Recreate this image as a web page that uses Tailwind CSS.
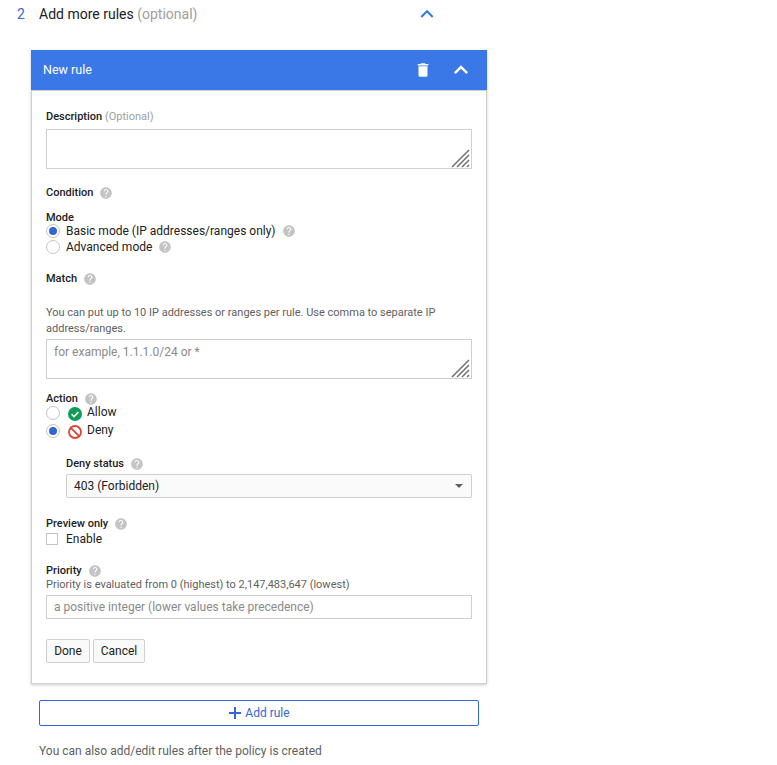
<!DOCTYPE html>
<html>
<head>
<meta charset="utf-8">
<script src="https://cdn.jsdelivr.net/npm/@tailwindcss/browser@4"></script>
</head>
<body class="bg-white font-['Roboto',sans-serif] text-[12px] text-[#212121] overflow-hidden">
<div class="w-[777px] h-[765px] overflow-hidden">
  <div class="h-[28px] flex items-center w-[440px] ml-[17px] text-[14px]">
    <span class="text-[#3367d6] w-[22px]">2</span>
    <span class="text-[#212121]">Add more rules <span class="text-[#9e9e9e]">(optional)</span></span>
    <svg class="ml-auto mr-[17px]" width="26" height="26" viewBox="0 0 24 24" fill="#3b78e7"><path d="M7.41 15.41L12 10.83l4.59 4.58L18 14l-6-6-6 6z"/></svg>
  </div>

  <div class="ml-[31px] mt-[22px] w-[456px] shadow-[0_1px_3px_rgba(0,0,0,0.2)]">
    <div class="h-[40px] bg-[#3b78e7] flex items-center pl-[12px] text-white">
      <span class="text-[12.5px]">New rule</span>
      <svg class="ml-auto" width="18" height="18" viewBox="0 0 24 24" fill="#fff"><path d="M6 19c0 1.1.9 2 2 2h8c1.1 0 2-.9 2-2V7H6v12zM19 4h-3.5l-1-1h-5l-1 1H5v2h14V4z"/></svg>
      <svg class="ml-[15px] mr-[12px]" width="28" height="28" viewBox="0 0 24 24" fill="#fff"><path d="M7.41 15.41L12 10.83l4.59 4.58L18 14l-6-6-6 6z"/></svg>
    </div>
    <div class="h-[594px] border border-[#cfcfcf] border-t-[#cfcfcf] px-[14px] pt-[18px] flex flex-col items-start">
      <div class="h-[16px] leading-[16px] text-[11px] font-medium">Description <span class="font-normal text-[#9e9e9e]">(Optional)</span></div>
      <div class="relative mt-[4px] w-[426px] h-[40px]">
        <textarea class="block w-full h-full border border-[#cfcfcf] resize-none outline-none"></textarea>
        <svg class="absolute right-[1px] bottom-[1px]" width="20" height="20" viewBox="0 0 20 20" stroke="#6f6f6f" stroke-width="1.5" fill="none"><path d="M1 19L18 2M6 19L18 7M11 19l7-7M16 19l2-2"/></svg>
      </div>

      <div class="mt-[16px] h-[16px] flex items-center gap-[6px] text-[11px] font-medium">Condition
        <svg width="14" height="14" viewBox="0 0 24 24" fill="#c4c4c4"><path d="M12 2C6.48 2 2 6.48 2 12s4.48 10 10 10 10-4.48 10-10S17.52 2 12 2zm1 17h-2v-2h2v2zm2.07-7.75l-.9.92C13.45 12.9 13 13.5 13 15h-2v-.5c0-1.1.45-2.1 1.17-2.83l1.24-1.26c.37-.36.59-.86.59-1.41 0-1.1-.9-2-2-2s-2 .9-2 2H8c0-2.21 1.79-4 4-4s4 1.79 4 4c0 .88-.36 1.68-.93 2.25z"/></svg>
      </div>
      <div class="mt-[10px] h-[13px] leading-[14px] text-[11px] font-medium">Mode</div>
      <div class="h-[14px] flex items-center">
        <span class="w-[14px] h-[14px] rounded-full border border-[#c4c4c4] flex items-center justify-center"><span class="w-[8px] h-[8px] rounded-full bg-[#3367d6]"></span></span>
        <span class="ml-[6px]">Basic mode (IP addresses/ranges only)</span>
        <svg class="ml-[6px]" width="14" height="14" viewBox="0 0 24 24" fill="#c4c4c4"><path d="M12 2C6.48 2 2 6.48 2 12s4.48 10 10 10 10-4.48 10-10S17.52 2 12 2zm1 17h-2v-2h2v2zm2.07-7.75l-.9.92C13.45 12.9 13 13.5 13 15h-2v-.5c0-1.1.45-2.1 1.17-2.83l1.24-1.26c.37-.36.59-.86.59-1.41 0-1.1-.9-2-2-2s-2 .9-2 2H8c0-2.21 1.79-4 4-4s4 1.79 4 4c0 .88-.36 1.68-.93 2.25z"/></svg>
      </div>
      <div class="mt-[2px] h-[14px] flex items-center">
        <span class="w-[14px] h-[14px] rounded-full border border-[#c4c4c4]"></span>
        <span class="ml-[6px]">Advanced mode</span>
        <svg class="ml-[6px]" width="14" height="14" viewBox="0 0 24 24" fill="#c4c4c4"><path d="M12 2C6.48 2 2 6.48 2 12s4.48 10 10 10 10-4.48 10-10S17.52 2 12 2zm1 17h-2v-2h2v2zm2.07-7.75l-.9.92C13.45 12.9 13 13.5 13 15h-2v-.5c0-1.1.45-2.1 1.17-2.83l1.24-1.26c.37-.36.59-.86.59-1.41 0-1.1-.9-2-2-2s-2 .9-2 2H8c0-2.21 1.79-4 4-4s4 1.79 4 4c0 .88-.36 1.68-.93 2.25z"/></svg>
      </div>

      <div class="mt-[17px] h-[16px] flex items-center gap-[6px] text-[11px] font-medium">Match
        <svg width="14" height="14" viewBox="0 0 24 24" fill="#c4c4c4"><path d="M12 2C6.48 2 2 6.48 2 12s4.48 10 10 10 10-4.48 10-10S17.52 2 12 2zm1 17h-2v-2h2v2zm2.07-7.75l-.9.92C13.45 12.9 13 13.5 13 15h-2v-.5c0-1.1.45-2.1 1.17-2.83l1.24-1.26c.37-.36.59-.86.59-1.41 0-1.1-.9-2-2-2s-2 .9-2 2H8c0-2.21 1.79-4 4-4s4 1.79 4 4c0 .88-.36 1.68-.93 2.25z"/></svg>
      </div>
      <p class="mt-[18px] w-[426px] text-[11px] leading-[16px] text-[#5f5f5f]">You can put up to 10 IP addresses or ranges per rule. Use comma to separate IP address/ranges.</p>
      <div class="relative mt-[2px] w-[426px] h-[40px]">
        <textarea class="block w-full h-full border border-[#cfcfcf] resize-none outline-none px-[7px] py-[3px] placeholder:text-[#8a8a8a]" placeholder="for example, 1.1.1.0/24 or *"></textarea>
        <svg class="absolute right-[1px] bottom-[1px]" width="20" height="20" viewBox="0 0 20 20" stroke="#6f6f6f" stroke-width="1.5" fill="none"><path d="M1 19L18 2M6 19L18 7M11 19l7-7M16 19l2-2"/></svg>
      </div>

      <div class="mt-[13px] h-[14px] flex items-center gap-[6px] text-[11px] font-medium">Action
        <svg width="14" height="14" viewBox="0 0 24 24" fill="#c4c4c4"><path d="M12 2C6.48 2 2 6.48 2 12s4.48 10 10 10 10-4.48 10-10S17.52 2 12 2zm1 17h-2v-2h2v2zm2.07-7.75l-.9.92C13.45 12.9 13 13.5 13 15h-2v-.5c0-1.1.45-2.1 1.17-2.83l1.24-1.26c.37-.36.59-.86.59-1.41 0-1.1-.9-2-2-2s-2 .9-2 2H8c0-2.21 1.79-4 4-4s4 1.79 4 4c0 .88-.36 1.68-.93 2.25z"/></svg>
      </div>
      <div class="h-[14px] flex items-center">
        <span class="w-[14px] h-[14px] rounded-full border border-[#c4c4c4]"></span>
        <svg class="ml-[8px] mt-[1px]" width="14" height="14" viewBox="0 0 14 14"><circle cx="7" cy="7" r="7" fill="#0f9d58"/><path d="M3.6 7.2l2.4 2.4 4.4-4.6" stroke="#fff" stroke-width="1.6" fill="none"/></svg>
        <span class="ml-[5px] -mt-[2px]">Allow</span>
      </div>
      <div class="mt-[4px] h-[14px] flex items-center">
        <span class="w-[14px] h-[14px] rounded-full border border-[#c4c4c4] flex items-center justify-center"><span class="w-[8px] h-[8px] rounded-full bg-[#3367d6]"></span></span>
        <svg class="ml-[8px] mt-[1px]" width="14" height="14" viewBox="0 0 14 14" fill="none" stroke="#db4437" stroke-width="1.8"><circle cx="7" cy="7" r="6"/><path d="M2.8 2.8l8.4 8.4"/></svg>
        <span class="ml-[5px] -mt-[2px]">Deny</span>
      </div>

      <div class="mt-[18px] ml-[20px] h-[16px] flex items-center gap-[6px] text-[11px] font-medium">Deny status
        <svg width="14" height="14" viewBox="0 0 24 24" fill="#c4c4c4"><path d="M12 2C6.48 2 2 6.48 2 12s4.48 10 10 10 10-4.48 10-10S17.52 2 12 2zm1 17h-2v-2h2v2zm2.07-7.75l-.9.92C13.45 12.9 13 13.5 13 15h-2v-.5c0-1.1.45-2.1 1.17-2.83l1.24-1.26c.37-.36.59-.86.59-1.41 0-1.1-.9-2-2-2s-2 .9-2 2H8c0-2.21 1.79-4 4-4s4 1.79 4 4c0 .88-.36 1.68-.93 2.25z"/></svg>
      </div>
      <div class="mt-[2px] ml-[20px] w-[406px] h-[24px] border border-[#cfcfcf] rounded-[2px] bg-[#fafafa] flex items-center px-[7px]">
        <span>403 (Forbidden)</span>
        <span class="ml-auto mr-[1px] w-0 h-0 border-x-[4px] border-x-transparent border-t-[4px] border-t-[#5f5f5f]"></span>
      </div>

      <div class="mt-[18px] h-[16px] flex items-center gap-[6px] text-[11px] font-medium">Preview only
        <svg width="14" height="14" viewBox="0 0 24 24" fill="#c4c4c4"><path d="M12 2C6.48 2 2 6.48 2 12s4.48 10 10 10 10-4.48 10-10S17.52 2 12 2zm1 17h-2v-2h2v2zm2.07-7.75l-.9.92C13.45 12.9 13 13.5 13 15h-2v-.5c0-1.1.45-2.1 1.17-2.83l1.24-1.26c.37-.36.59-.86.59-1.41 0-1.1-.9-2-2-2s-2 .9-2 2H8c0-2.21 1.79-4 4-4s4 1.79 4 4c0 .88-.36 1.68-.93 2.25z"/></svg>
      </div>
      <div class="h-[14px] flex items-center">
        <span class="w-[12px] h-[12px] border border-[#c4c4c4]"></span>
        <span class="ml-[8px]">Enable</span>
      </div>

      <div class="mt-[18px] h-[14px] flex items-center gap-[6px] text-[11px] font-medium">Priority
        <svg width="14" height="14" viewBox="0 0 24 24" fill="#c4c4c4"><path d="M12 2C6.48 2 2 6.48 2 12s4.48 10 10 10 10-4.48 10-10S17.52 2 12 2zm1 17h-2v-2h2v2zm2.07-7.75l-.9.92C13.45 12.9 13 13.5 13 15h-2v-.5c0-1.1.45-2.1 1.17-2.83l1.24-1.26c.37-.36.59-.86.59-1.41 0-1.1-.9-2-2-2s-2 .9-2 2H8c0-2.21 1.79-4 4-4s4 1.79 4 4c0 .88-.36 1.68-.93 2.25z"/></svg>
      </div>
      <div class="h-[14px] leading-[14px] text-[11px] text-[#5f5f5f]">Priority is evaluated from 0 (highest) to 2,147,483,647 (lowest)</div>
      <input class="mt-[3px] w-[426px] h-[24px] border border-[#cfcfcf] outline-none px-[7px] placeholder:text-[#8a8a8a]" placeholder="a positive integer (lower values take precedence)">

      <div class="mt-[20px] flex gap-[3px]">
        <button class="h-[24px] w-[44px] border border-[#cfcfcf] rounded-[2px] bg-[#fafafa]">Done</button>
        <button class="h-[24px] w-[52px] border border-[#cfcfcf] rounded-[2px] bg-[#fafafa]">Cancel</button>
      </div>
    </div>
  </div>

  <div class="ml-[39px] mt-[16px] w-[440px] h-[26px] border border-[#3367d6] rounded-[2px] flex items-center justify-center text-[#3367d6] gap-[3px]">
    <svg width="14" height="14" viewBox="0 0 14 14" fill="#3367d6"><path d="M6 1h2v5h5v2H8v5H6V8H1V6h5z"/></svg>
    <span>Add rule</span>
  </div>
  <p class="ml-[39px] mt-[17px] h-[16px] leading-[16px] text-[#5f5f5f]">You can also add/edit rules after the policy is created</p>
</div>
</body>
</html>
